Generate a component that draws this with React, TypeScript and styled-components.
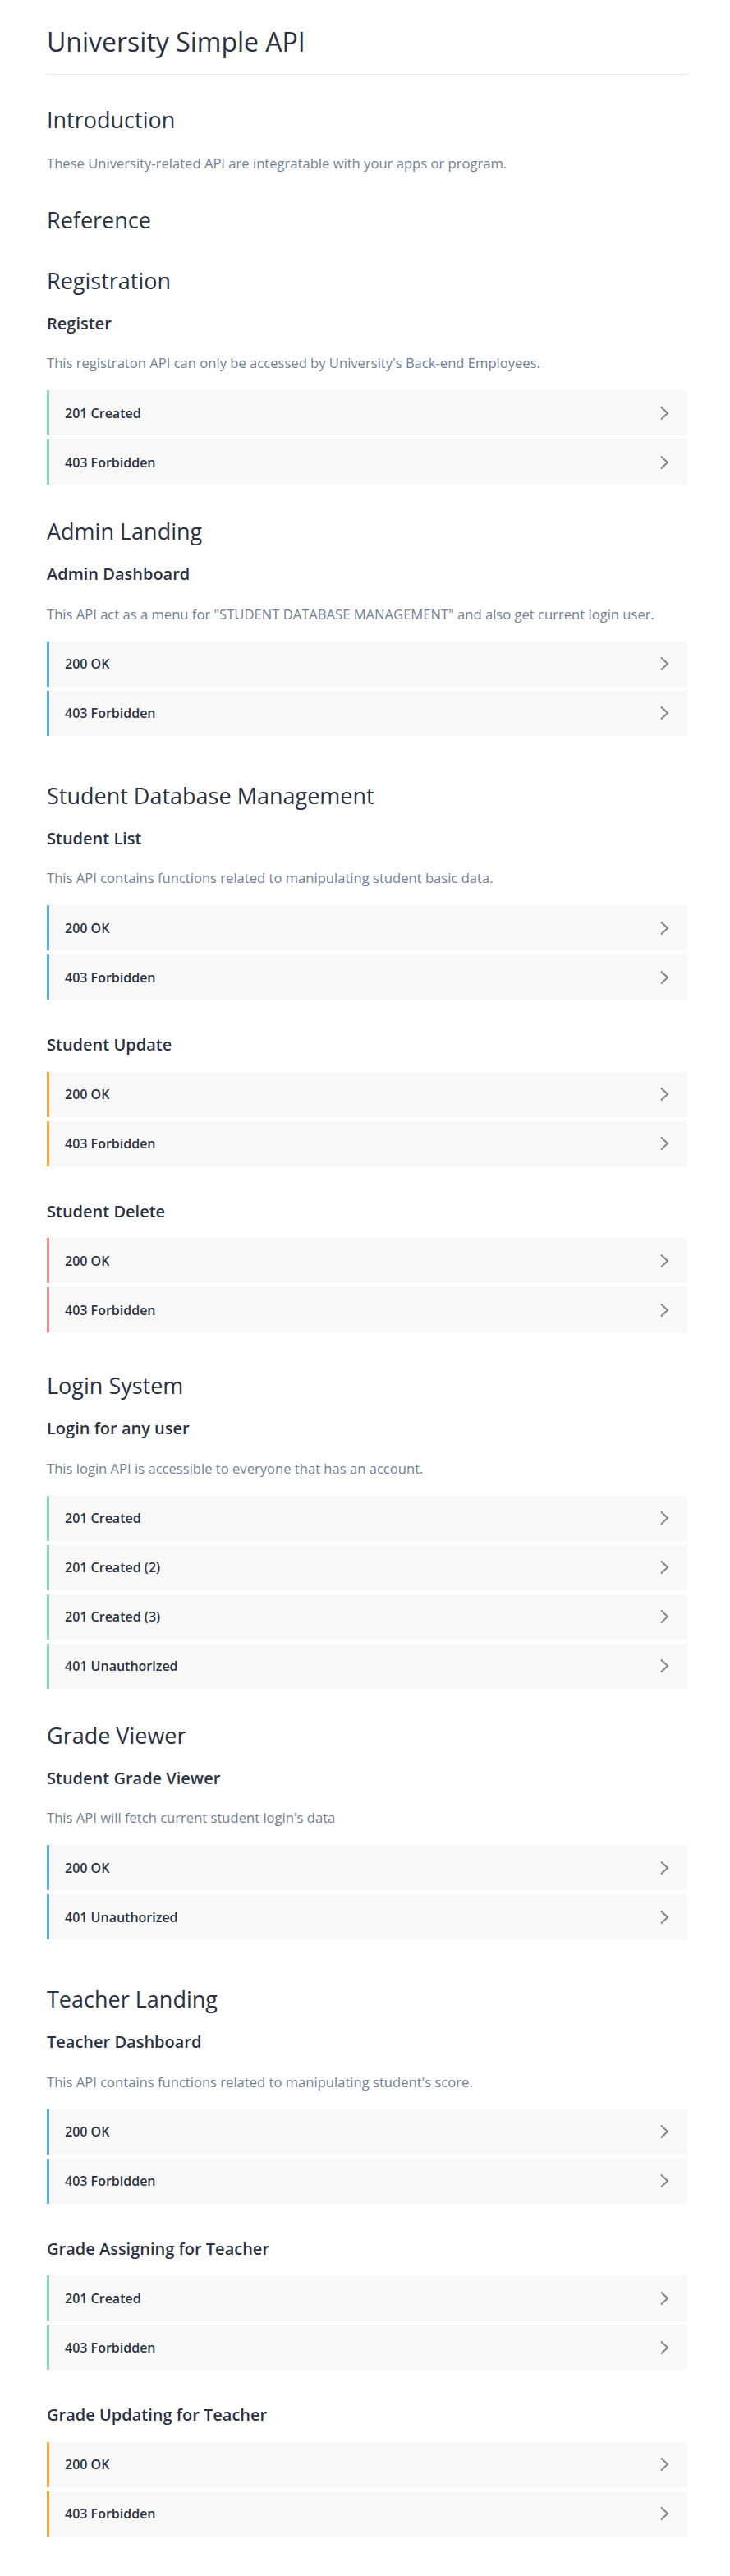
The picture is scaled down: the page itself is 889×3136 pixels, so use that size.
import React from 'react'
import styled, { createGlobalStyle } from 'styled-components'

const GlobalStyle = createGlobalStyle`
  html, body {
    margin: 0;
    padding: 0;
    background: #fff;
  }
  body {
    font-family: "Open Sans", "Noto Sans", sans-serif;
    color: #2d3748;
  }
`;

type Method = 'post' | 'get' | 'put' | 'delete';

const methodColors: Record<Method, string> = {
  post: '#8dd3bb',
  get: '#5ea9f5',
  put: '#f8a43a',
  delete: '#f2868f',
};

const Page = styled.main`
  padding: 31px 52px 48px 57px;
`;

const Title = styled.h1`
  margin: 0;
  padding-bottom: 19px;
  border-bottom: 1px solid #e5e7eb;
  font-size: 32px;
  line-height: 40px;
  font-weight: 500;
  color: #2a3142;
`;

const Heading = styled.h2<{ $gap: number }>`
  margin: ${p => p.$gap}px 0 0;
  font-size: 27px;
  line-height: 36px;
  font-weight: 500;
  color: #2a3142;
`;

const SubHeading = styled.h3<{ $gap: number }>`
  margin: ${p => p.$gap}px 0 0;
  font-size: 20px;
  line-height: 28px;
  font-weight: 600;
  color: #2a3142;
`;

const Text = styled.p`
  margin: 22.5px 0 0;
  font-size: 16.6px;
  line-height: 24px;
  color: #718096;
`;

const ResponseList = styled.div<{ $gap: number }>`
  margin-top: ${p => p.$gap}px;
  display: flex;
  flex-direction: column;
  gap: 5px;
`;

const ResponseRow = styled.div<{ $method: Method }>`
  box-sizing: border-box;
  height: 55px;
  display: flex;
  align-items: center;
  justify-content: space-between;
  padding: 0 22px 0 19px;
  background: #f8f8f8;
  border-left: 3px solid ${p => methodColors[p.$method]};
  font-size: 16px;
  line-height: 24px;
  font-weight: 600;
  color: #2a3142;
  cursor: pointer;
`;

const Chevron = () => (
  <svg width="12" height="18" viewBox="0 0 12 18" fill="none">
    <polyline points="2,1.5 10,9 2,16.5" stroke="#868686" strokeWidth="2" />
  </svg>
);

type Endpoint = {
  name: string;
  desc?: string;
  method: Method;
  responses: string[];
};

type Section = {
  title: string;
  extra?: number;
  endpoints: Endpoint[];
};

const sections: Section[] = [
  {
    title: 'Registration',
    endpoints: [
      {
        name: 'Register',
        desc: "This registraton API can only be accessed by University's Back-end Employees.",
        method: 'post',
        responses: ['201 Created', '403 Forbidden'],
      },
    ],
  },
  {
    title: 'Admin Landing',
    extra: 16,
    endpoints: [
      {
        name: 'Admin Dashboard',
        desc: 'This API act as a menu for "STUDENT DATABASE MANAGEMENT" and also get current login user.',
        method: 'get',
        responses: ['200 OK', '403 Forbidden'],
      },
    ],
  },
  {
    title: 'Student Database Management',
    extra: 8,
    endpoints: [
      {
        name: 'Student List',
        desc: 'This API contains functions related to manipulating student basic data.',
        method: 'get',
        responses: ['200 OK', '403 Forbidden'],
      },
      { name: 'Student Update', method: 'put', responses: ['200 OK', '403 Forbidden'] },
      { name: 'Student Delete', method: 'delete', responses: ['200 OK', '403 Forbidden'] },
    ],
  },
  {
    title: 'Login System',
    endpoints: [
      {
        name: 'Login for any user',
        desc: 'This login API is accessible to everyone that has an account.',
        method: 'post',
        responses: ['201 Created', '201 Created (2)', '201 Created (3)', '401 Unauthorized'],
      },
    ],
  },
  {
    title: 'Grade Viewer',
    extra: 16,
    endpoints: [
      {
        name: 'Student Grade Viewer',
        desc: "This API will fetch current student login's data",
        method: 'get',
        responses: ['200 OK', '401 Unauthorized'],
      },
    ],
  },
  {
    title: 'Teacher Landing',
    endpoints: [
      {
        name: 'Teacher Dashboard',
        desc: "This API contains functions related to manipulating student's score.",
        method: 'get',
        responses: ['200 OK', '403 Forbidden'],
      },
      { name: 'Grade Assigning for Teacher', method: 'post', responses: ['201 Created', '403 Forbidden'] },
      { name: 'Grade Updating for Teacher', method: 'put', responses: ['200 OK', '403 Forbidden'] },
    ],
  },
];

function EndpointBlock({ endpoint, first }: { endpoint: Endpoint; first: boolean }) {
  return (
    <>
      <SubHeading $gap={first ? 20 : 41}>{endpoint.name}</SubHeading>
      {endpoint.desc && <Text>{endpoint.desc}</Text>}
      <ResponseList $gap={endpoint.desc ? 21 : 18.5}>
        {endpoint.responses.map(r => (
          <ResponseRow key={r} $method={endpoint.method}>
            <span>{r}</span>
            <Chevron />
          </ResponseRow>
        ))}
      </ResponseList>
    </>
  );
}

function App() {
  let prevExtra = 0;
  return (
    <>
      <GlobalStyle />
      <Page>
        <Title>University Simple API</Title>
        <Heading $gap={37}>Introduction</Heading>
        <Text>These University-related API are integratable with your apps or program.</Text>
        <Heading $gap={39}>Reference</Heading>
        {sections.map((s, i) => {
          const gap = i === 0 ? 38 : 39 + prevExtra;
          prevExtra = s.extra || 0;
          return (
            <section key={s.title}>
              <Heading $gap={gap}>{s.title}</Heading>
              {s.endpoints.map((e, j) => (
                <EndpointBlock key={e.name} endpoint={e} first={j === 0} />
              ))}
            </section>
          );
        })}
      </Page>
    </>
  )
}

export default App
